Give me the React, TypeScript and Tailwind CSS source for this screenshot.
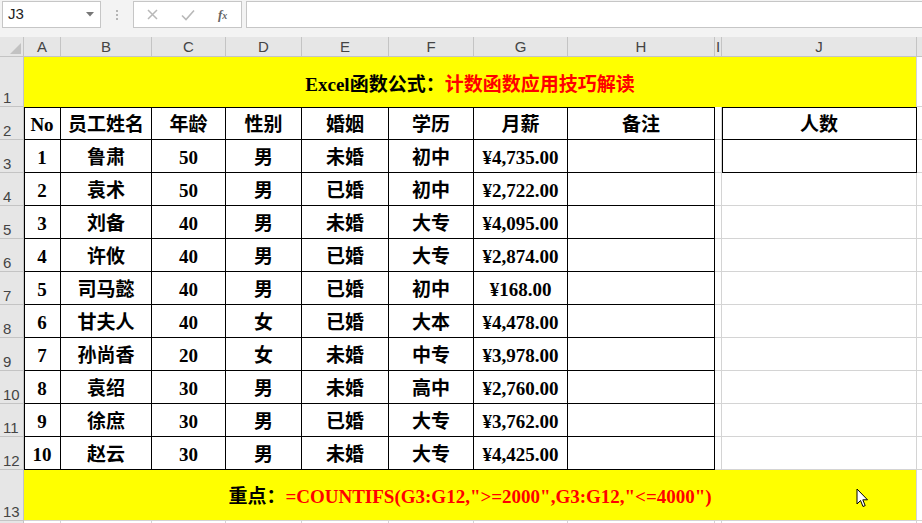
import React from 'react';

const COLS = ['A', 'B', 'C', 'D', 'E', 'F', 'G', 'H', 'I', 'J'];

const rows = [
  ['1', '鲁肃', '50', '男', '未婚', '初中', '¥4,735.00'],
  ['2', '袁术', '50', '男', '已婚', '初中', '¥2,722.00'],
  ['3', '刘备', '40', '男', '未婚', '大专', '¥4,095.00'],
  ['4', '许攸', '40', '男', '已婚', '大专', '¥2,874.00'],
  ['5', '司马懿', '40', '男', '已婚', '初中', '¥168.00'],
  ['6', '甘夫人', '40', '女', '已婚', '大本', '¥4,478.00'],
  ['7', '孙尚香', '20', '女', '未婚', '中专', '¥3,978.00'],
  ['8', '袁绍', '30', '男', '未婚', '高中', '¥2,760.00'],
  ['9', '徐庶', '30', '男', '已婚', '大专', '¥3,762.00'],
  ['10', '赵云', '30', '男', '未婚', '大专', '¥4,425.00'],
];

const header = ['No', '员工姓名', '年龄', '性别', '婚姻', '学历', '月薪', '备注'];

const serif = "font-['Liberation_Serif','Noto_Sans_CJK_SC',serif]";
const sans = "font-['Liberation_Sans','Noto_Sans_CJK_SC',sans-serif]";

function RowHead({ n, h }: { n?: number; h: string }) {
  return (
    <div
      className={`${h} ${sans} flex items-end pl-[3px] pb-[1px] bg-[#e6e6e6] border-r border-b border-[#c4c4c4] text-[15px] leading-none text-[#444]`}
    >
      {n}
    </div>
  );
}

// col: 0..9 = A..J, 10 = the sliver past J
function Cell({ row, col, children }: { row: number; col: number; children?: React.ReactNode }) {
  const inTable = (row >= 2 && row <= 12 && col <= 7) || ((row === 2 || row === 3) && col === 9);
  const left = inTable && (col === 0 || col === 9);
  const top = inTable && row === 2;
  const shadow =
    left && top
      ? 'shadow-[inset_1px_1px_0_#000]'
      : left
        ? 'shadow-[inset_1px_0_0_#000]'
        : top
          ? 'shadow-[inset_0_1px_0_#000]'
          : '';
  const border =
    col === 10
      ? 'border-b border-[#d4d4d4]'
      : inTable
        ? 'border-r border-b border-black'
        : 'border-r border-b border-[#d4d4d4]';
  return (
    <div
      className={`${border} ${shadow} ${serif} flex items-center justify-center pt-[4px] bg-white text-[19px] leading-[22px] font-bold text-black whitespace-nowrap overflow-hidden`}
    >
      {children}
    </div>
  );
}

function Cursor() {
  return (
    <svg
      className="absolute left-[856px] top-[488px]"
      width="14"
      height="21"
      viewBox="0 0 14 21"
    >
      <path
        d="M1 1 L1 16 L4.5 12.5 L7 18.5 L9.2 17.6 L6.8 11.8 L11.5 11.8 Z"
        fill="#fff"
        stroke="#000"
        strokeWidth="1"
        strokeLinejoin="miter"
      />
    </svg>
  );
}

export default function App() {
  return (
    <div className="relative w-[922px] h-[523px] overflow-hidden bg-[#f3f3f3] select-none">
      {/* formula bar */}
      <div className="flex items-start h-[37px] pt-[1px] gap-0">
        <div className={`${sans} ml-[2px] w-[99px] h-[27px] bg-white border border-[#c6c6c6] flex items-center justify-between pl-[5px] pr-[6px] text-[15px] text-[#222]`}>
          <span>J3</span>
          <svg width="8" height="5" viewBox="0 0 8 5">
            <path d="M0 0 L8 0 L4 4.5 Z" fill="#777" />
          </svg>
        </div>
        <div className="w-[32px] h-[27px] flex flex-col items-center justify-center gap-[2px]">
          <span className="w-[2px] h-[2px] bg-[#b5b5b5]" />
          <span className="w-[2px] h-[2px] bg-[#b5b5b5]" />
          <span className="w-[2px] h-[2px] bg-[#b5b5b5]" />
        </div>
        <div className="w-[109px] h-[27px] bg-white border border-[#c6c6c6] flex items-center">
          <svg className="ml-[13px]" width="11" height="11" viewBox="0 0 11 11">
            <path d="M1 1 L10 10 M10 1 L1 10" stroke="#b8b8b8" strokeWidth="1.5" />
          </svg>
          <svg className="ml-[23px]" width="14" height="12" viewBox="0 0 14 12">
            <path d="M1 6.5 L5 10.5 L13 1.5" stroke="#b8b8b8" strokeWidth="1.6" fill="none" />
          </svg>
          <span className={`ml-[23px] font-['Liberation_Serif',serif] italic font-bold text-[13px] text-[#666]`}>
            f<span className="text-[10px]">x</span>
          </span>
        </div>
        <div className="ml-[4px] flex-1 h-[27px] bg-white border border-[#c6c6c6] border-r-0" />
      </div>

      {/* sheet */}
      <div className="grid grid-cols-[24px_37px_91px_74px_76px_87px_85px_94px_147px_7px_195px_1fr]">
        {/* column header row */}
        <div className="h-[20px] bg-[#e6e6e6] border-r border-b border-[#c4c4c4] flex items-end justify-end p-[2px]">
          <svg width="11" height="11" viewBox="0 0 11 11">
            <path d="M11 0 L11 11 L0 11 Z" fill="#c2c2c2" />
          </svg>
        </div>
        {COLS.map((c) => (
          <div
            key={c}
            className={`${sans} h-[20px] bg-[#e6e6e6] border-r border-b border-[#c4c4c4] flex items-center justify-center text-[15px] leading-none text-[#444] overflow-hidden`}
          >
            {c}
          </div>
        ))}
        <div className="h-[20px] bg-[#e6e6e6] border-b border-[#c4c4c4]" />

        {/* row 1 title */}
        <RowHead n={1} h="h-[50px]" />
        <div
          className={`col-span-10 ${serif} bg-[#ffff00] border-r border-[#d4d4d4] flex items-center justify-center pt-[5px] text-[19px] leading-[22px] font-bold whitespace-nowrap`}
        >
          <span className="text-black">Excel函数公式：</span>
          <span className="text-[#ff0000]">计数函数应用技巧解读</span>
        </div>
        <div className="bg-white border-b border-[#d4d4d4]" />

        {/* row 2 header */}
        <RowHead n={2} h="h-[33px]" />
        {header.map((t, i) => (
          <Cell key={t} row={2} col={i}>
            {t}
          </Cell>
        ))}
        <Cell row={2} col={8} />
        <Cell row={2} col={9}>
          人数
        </Cell>
        <Cell row={2} col={10} />

        {/* rows 3-12 */}
        {rows.map((r, ri) => {
          const rowNo = ri + 3;
          return (
            <React.Fragment key={rowNo}>
              <RowHead n={rowNo} h="h-[33px]" />
              {r.map((v, ci) => (
                <Cell key={ci} row={rowNo} col={ci}>
                  {v}
                </Cell>
              ))}
              <Cell row={rowNo} col={7} />
              <Cell row={rowNo} col={8} />
              <Cell row={rowNo} col={9} />
              <Cell row={rowNo} col={10} />
            </React.Fragment>
          );
        })}

        {/* row 13 formula */}
        <RowHead n={13} h="h-[51px]" />
        <div
          className={`col-span-10 ${serif} bg-[#ffff00] border-r border-b border-[#d4d4d4] flex items-center justify-center pt-[4px] text-[19px] leading-[22px] font-bold whitespace-nowrap`}
        >
          <span className="text-black">重点：</span>
          <span className="text-[#ff0000]">=COUNTIFS(G3:G12,"&gt;=2000",G3:G12,"&lt;=4000")</span>
        </div>
        <div className="bg-white border-b border-[#d4d4d4]" />

        <RowHead h="h-[20px]" />
        {COLS.map((c) => (
          <div key={c} className="bg-white border-r border-b border-[#d4d4d4]" />
        ))}
        <div className="bg-white" />
      </div>

      <Cursor />
    </div>
  );
}
